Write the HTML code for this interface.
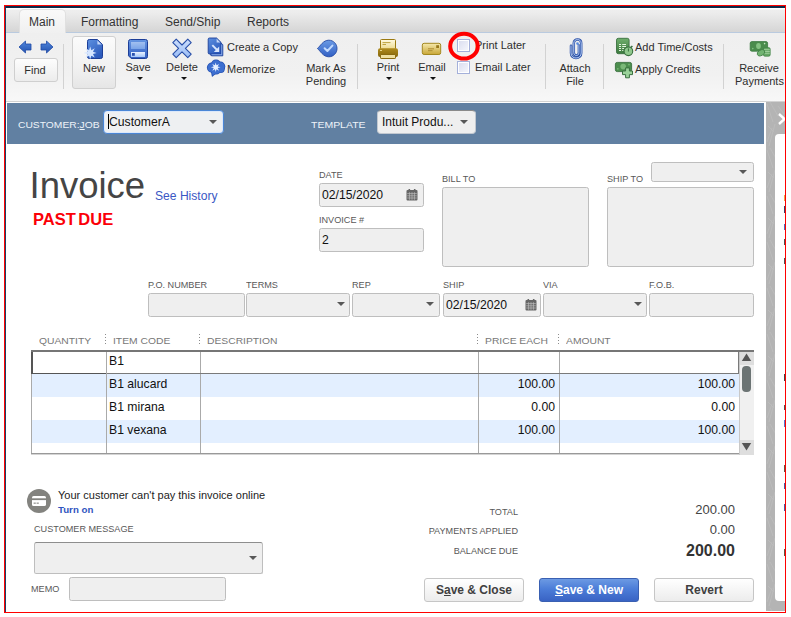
<!DOCTYPE html>
<html>
<head>
<meta charset="utf-8">
<title>Invoice</title>
<style>
html,body{margin:0;padding:0;background:#fff;}
body{width:791px;height:617px;overflow:hidden;position:relative;font-family:"Liberation Sans",Arial,sans-serif;color:#333;}
#frame{position:absolute;left:4px;top:5px;width:780px;height:606px;border:1px solid #f00;overflow:hidden;background:#fff;}
#pg{position:absolute;left:-5px;top:-6px;width:791px;height:617px;}
#pg div,#pg span,#pg svg{position:absolute;}
.t{white-space:nowrap;line-height:1;}
.tb{font-size:11px;color:#2e2e2e;}
.c{text-align:center;}
.lbl{font-size:9.6px;color:#585858;transform:scaleX(0.95);transform-origin:0 0;}
.lbl.r{transform-origin:100% 0;}
.fld{background:#efefef;border:1px solid #bebebe;border-radius:2.5px;box-sizing:border-box;}
.sep{width:1px;background:#d2d2d2;top:44px;height:45px;}
.arr{width:0;height:0;border-left:4px solid transparent;border-right:4px solid transparent;border-top:4.5px solid #585858;}
.tarr{width:0;height:0;border-left:3px solid transparent;border-right:3px solid transparent;border-top:3px solid #111;}
.hl{font-size:9.5px;color:#777;transform:scaleX(1.085);transform-origin:0 0;}
.r{text-align:right;}
.dot{top:334px;width:1px;height:11px;background:repeating-linear-gradient(#8c8c8c 0,#8c8c8c 1px,transparent 1px,transparent 3px);}
.cell{font-size:12.2px;color:#111;}
.btn{box-sizing:border-box;border:1px solid #c6c6c6;border-radius:3px;background:linear-gradient(#ffffff,#ececec);font-size:12px;font-weight:bold;color:#404040;text-align:center;line-height:22px;width:100px;height:24px;top:578px;}
</style>
</head>
<body>
<div id="frame"><div id="pg">

<!-- chrome -->
<div style="left:5px;top:8px;width:780px;height:25px;background:linear-gradient(#ffffff 0,#ffffff 1px,#eeeeee 2px,#ececec 20%,#d5d5d5 96%,#d5d5d5);"></div>
<div style="left:5px;top:32px;width:780px;height:1px;background:#b9cadf;"></div>
<div style="left:5px;top:33px;width:780px;height:69px;background:linear-gradient(#efefef,#f1f1f1 60%,#f8f8f8);"></div>
<div style="left:5px;top:101px;width:780px;height:1px;background:#d2d2d2;"></div>
<div style="left:5px;top:6px;width:780px;height:2px;background:#0d2a4a;"></div>
<div style="left:5px;top:6px;width:1px;height:606px;background:#1f3f63;"></div>

<!-- tabs -->
<div style="left:19px;top:9px;width:47px;height:24px;box-sizing:border-box;border:1px solid #e0e0e0;border-bottom:none;border-radius:5px 5px 0 0;background:linear-gradient(#f9f9f9,#f0f0f0);"></div>
<div class="t" style="left:29px;top:16px;font-size:12px;color:#333;">Main</div>
<div class="t" style="left:81px;top:16px;font-size:12px;color:#333;">Formatting</div>
<div class="t" style="left:165px;top:16px;font-size:12px;color:#333;">Send/Ship</div>
<div class="t" style="left:247px;top:16px;font-size:12px;color:#333;">Reports</div>

<!-- toolbar: nav -->
<svg style="left:18px;top:40px" width="14" height="14" viewBox="0 0 14 14"><defs><linearGradient id="gb" x1="0" y1="0" x2="0" y2="1"><stop offset="0" stop-color="#4f86dc"/><stop offset="1" stop-color="#2553b0"/></linearGradient></defs><path d="M1 7 L7.5 1 L7.5 4 L13 4 L13 10 L7.5 10 L7.5 13 Z" fill="url(#gb)" stroke="#1f4aa6" stroke-width="0.8" stroke-linejoin="round"/></svg>
<svg style="left:40px;top:40px" width="14" height="14" viewBox="0 0 14 14"><path d="M13 7 L6.5 1 L6.5 4 L1 4 L1 10 L6.5 10 L6.5 13 Z" fill="url(#gb)" stroke="#1f4aa6" stroke-width="0.8" stroke-linejoin="round"/></svg>
<div style="left:14px;top:58px;width:44px;height:24px;box-sizing:border-box;border:1px solid #cfcfcf;border-radius:3px;background:linear-gradient(#fdfdfd,#ececec);"></div>
<div class="t tb c" style="left:13px;top:65px;width:44px;">Find</div>
<div class="sep" style="left:63px;"></div>

<!-- New -->
<div style="left:72px;top:36px;width:44px;height:53px;box-sizing:border-box;border:1px solid #d0d0d0;border-radius:3px;background:linear-gradient(#fbfbfb,#f1f1f1 60%,#e6e6e6);"></div>
<svg style="left:85px;top:38px;overflow:visible" width="20" height="22" viewBox="0 0 20 22"><defs><linearGradient id="gn" x1="0" y1="0" x2="0.6" y2="1"><stop offset="0" stop-color="#5d90e0"/><stop offset="1" stop-color="#2c5abc"/></linearGradient></defs><path d="M4.3 1.5 H12.4 L17.5 6.6 V18.7 Q17.5 20.5 15.7 20.5 H4.3 Q2.5 20.5 2.5 18.7 V3.3 Q2.5 1.5 4.3 1.5 Z" fill="url(#gn)" stroke="#1d3f98" stroke-width="1"/><path d="M12.4 2.4 V6.6 H16.6 Z" fill="#c2d6f8"/><path d="M5.20,8.50 L6.35,12.13 L9.73,10.37 L7.97,13.75 L11.60,14.90 L7.97,16.05 L9.73,19.43 L6.35,17.67 L5.20,21.30 L4.05,17.67 L0.67,19.43 L2.43,16.05 L-1.20,14.90 L2.43,13.75 L0.67,10.37 L4.05,12.13Z" fill="#d6e6ff"/></svg>
<div class="t tb c" style="left:72px;top:63px;width:44px;">New</div>

<!-- Save -->
<svg style="left:127px;top:38px" width="22" height="22" viewBox="0 0 22 22"><defs><linearGradient id="gs" x1="0" y1="0" x2="0" y2="1"><stop offset="0" stop-color="#6696e2"/><stop offset="1" stop-color="#335fc2"/></linearGradient><linearGradient id="gs2" x1="0" y1="0" x2="0" y2="1"><stop offset="0" stop-color="#a2c0f0"/><stop offset="1" stop-color="#7aa4e8"/></linearGradient><linearGradient id="gs3" x1="0" y1="0" x2="0" y2="1"><stop offset="0" stop-color="#eaf2ff"/><stop offset="1" stop-color="#a4c6fa"/></linearGradient></defs><path d="M3.5 1.5 H18.5 Q20.5 1.5 20.5 3.5 V18.5 Q20.5 20.5 18.5 20.5 H4.2 L1.5 17.8 V3.5 Q1.5 1.5 3.5 1.5 Z" fill="url(#gs)" stroke="#1d3f98" stroke-width="1"/><rect x="4" y="4" width="14" height="7" fill="url(#gs2)"/><rect x="4" y="14" width="14" height="5" fill="url(#gs3)"/><rect x="5" y="15" width="2.8" height="2.8" fill="#2a52b0"/></svg>
<div class="t tb c" style="left:118px;top:62px;width:40px;">Save</div>
<div class="tarr" style="left:137px;top:77px;"></div>

<!-- Delete -->
<svg style="left:171px;top:38px" width="22" height="22" viewBox="0 0 22 22"><defs><linearGradient id="gx" x1="0" y1="0" x2="1" y2="1"><stop offset="0" stop-color="#dbe8fe"/><stop offset="1" stop-color="#8ab2f4"/></linearGradient></defs><g transform="translate(11,10.4) rotate(45)"><path d="M-2.4,-10.6 H2.4 V-2.4 H10.6 V2.4 H2.4 V10.6 H-2.4 V2.4 H-10.6 V-2.4 H-2.4 Z" fill="url(#gx)" stroke="#274ea8" stroke-width="1.1" stroke-linejoin="round"/></g></svg>
<div class="t tb c" style="left:160px;top:62px;width:44px;">Delete</div>
<div class="tarr" style="left:181px;top:77px;"></div>

<!-- Create copy / memorize -->
<svg style="left:207px;top:37px" width="18" height="20" viewBox="0 0 18 20"><path d="M3.5 3.5 H11.6 L15.8 7.7 V18.8 H5 Q3.5 18.8 3.5 17.5 Z" fill="#3f70d0" stroke="#1d3f98" stroke-width="0.9"/><path d="M2.5 1 H9.6 L14 5.4 V17 H2.5 Q1.2 17 1.2 15.8 V2.2 Q1.2 1 2.5 1 Z" fill="url(#gn)" stroke="#1d3f98" stroke-width="0.9"/><path d="M14.7 7.6 V17.7 H4.6" fill="none" stroke="#a8c6f6" stroke-width="0.7"/><path d="M9.6 1.7 V5.4 H13.3 Z" fill="#c2d6f8"/><path d="M5.3 8.2 L10.6 13.5" stroke="#d8e6fe" stroke-width="1.9"/><path d="M12.2 15 V9.6 L6.8 15 Z" fill="#d8e6fe"/></svg>
<div class="t tb" style="left:227px;top:42px;">Create a Copy</div>
<svg style="left:206px;top:59px" width="20" height="19" viewBox="0 0 20 19"><g fill="#2450b0"><circle cx="6" cy="8.6" r="5.1"/><circle cx="10" cy="5.6" r="5.1"/><circle cx="14.2" cy="7.6" r="5.1"/><circle cx="10" cy="10.2" r="5.3"/><circle cx="14.6" cy="10" r="4.1"/><path d="M4.6 11 L6 18 L11.5 13.5 Z"/></g><g fill="#3d6fd0"><circle cx="6" cy="8.6" r="4.3999999999999995"/><circle cx="10" cy="5.6" r="4.3999999999999995"/><circle cx="14.2" cy="7.6" r="4.3999999999999995"/><circle cx="10" cy="10.2" r="4.6"/><circle cx="14.6" cy="10" r="3.4"/><path d="M5.6 12 L6.6 16.6 L10.5 13.4 Z"/></g><path d="M9.70,3.50 L10.50,6.36 L13.09,4.91 L11.64,7.50 L14.50,8.30 L11.64,9.10 L13.09,11.69 L10.50,10.24 L9.70,13.10 L8.90,10.24 L6.31,11.69 L7.76,9.10 L4.90,8.30 L7.76,7.50 L6.31,4.91 L8.90,6.36Z" fill="#e6f0ff"/></svg>
<div class="t tb" style="left:227px;top:64px;">Memorize</div>

<!-- Mark as pending -->
<svg style="left:316px;top:39px" width="23" height="19" viewBox="0 0 23 19"><defs><linearGradient id="gk" x1="0" y1="0" x2="0" y2="1"><stop offset="0" stop-color="#6a9ae4"/><stop offset="1" stop-color="#3260c4"/></linearGradient></defs><path d="M1.4 9.5 C4.5 7 7 1.2 12.8 1.2 C17.4 1.2 21 4.9 21 9.5 C21 14.1 17.4 17.8 12.8 17.8 C7 17.8 4.5 12 1.4 9.5 Z" fill="url(#gk)" stroke="#2248a4" stroke-width="0.9"/><path d="M8.6 9.2 L11.4 12 L16.4 6.6" fill="none" stroke="#c2dafe" stroke-width="2" stroke-linecap="round" stroke-linejoin="round"/></svg>
<div class="t tb c" style="left:300px;top:63px;width:52px;">Mark As</div>
<div class="t tb c" style="left:300px;top:76px;width:52px;">Pending</div>
<div class="sep" style="left:357px;"></div>

<!-- Print / Email -->
<svg style="left:377px;top:38px" width="22" height="22" viewBox="0 0 22 22"><defs><linearGradient id="gp" x1="0" y1="0" x2="0" y2="1"><stop offset="0" stop-color="#fffbe2"/><stop offset="1" stop-color="#ecd98c"/></linearGradient><linearGradient id="go" x1="0" y1="0" x2="0" y2="1"><stop offset="0" stop-color="#b08c1e"/><stop offset="1" stop-color="#86670c"/></linearGradient></defs><rect x="3.5" y="1.5" width="15" height="10" rx="1" fill="url(#gp)" stroke="#9a7a12" stroke-width="1"/><path d="M5.5 4.6 H13.5 M5.5 6.5 H9" stroke="#b89a30" stroke-width="0.9"/><rect x="1" y="10.2" width="20" height="8.8" rx="2" fill="url(#go)"/><rect x="3" y="12" width="2" height="1" fill="#e8d68a"/><rect x="3.5" y="16.5" width="15" height="4" rx="0.6" fill="#efe0a0" stroke="#8a6a10" stroke-width="1"/></svg>
<div class="t tb c" style="left:368px;top:62px;width:40px;">Print</div>
<div class="tarr" style="left:386px;top:77px;"></div>
<svg style="left:421px;top:42px" width="21" height="14" viewBox="0 0 21 14"><defs><linearGradient id="ge" x1="0" y1="0" x2="0" y2="1"><stop offset="0" stop-color="#f6e9ac"/><stop offset="1" stop-color="#c8a636"/></linearGradient></defs><rect x="1.3" y="1.3" width="18.4" height="11.2" rx="1.8" fill="url(#ge)" stroke="#a38820" stroke-width="1"/><rect x="15.2" y="3.2" width="2.8" height="2.8" fill="#98781a"/><path d="M7 6.8 H13 M7 8.7 H11.5" stroke="#a8882a" stroke-width="0.9"/></svg>
<div class="t tb c" style="left:412px;top:62px;width:40px;">Email</div>
<div class="tarr" style="left:430px;top:77px;"></div>

<!-- checkboxes -->
<div style="left:457px;top:39px;width:13px;height:13px;box-sizing:border-box;border:1px solid #a4b0da;background:#fff;"></div>
<div style="left:459px;top:41px;width:9px;height:9px;background:linear-gradient(135deg,#dcdff0,#f4f5fb);"></div>
<div style="left:457px;top:61px;width:13px;height:13px;box-sizing:border-box;border:1px solid #a4b0da;background:#fff;"></div>
<div style="left:459px;top:63px;width:9px;height:9px;background:linear-gradient(135deg,#dcdff0,#f4f5fb);"></div>
<div class="t tb" style="left:475px;top:40px;">Print Later</div>
<div class="t tb" style="left:475px;top:62px;">Email Later</div>
<div class="sep" style="left:545px;"></div>

<!-- Attach -->
<svg style="left:568px;top:37px" width="16" height="23" viewBox="0 0 16 23"><path d="M3 8.8 V16 C3 19.5 5.5 21 8 21 C11 21 13.2 19 13.2 16 V6.2 C13.2 3.8 11.6 2.6 9.5 2.6 C7.4 2.6 5.8 3.8 5.8 6.2 V15.5 C5.8 17.5 7 18.5 8.4 18.5 C9.8 18.5 10.9 17.5 10.9 15.5 V8.5" fill="none" stroke="#2c52a8" stroke-width="2.5" stroke-linecap="round"/><path d="M3 8.8 V16 C3 19.5 5.5 21 8 21 C11 21 13.2 19 13.2 16 V6.2 C13.2 3.8 11.6 2.6 9.5 2.6 C7.4 2.6 5.8 3.8 5.8 6.2 V15.5 C5.8 17.5 7 18.5 8.4 18.5 C9.8 18.5 10.9 17.5 10.9 15.5 V8.5" fill="none" stroke="#c6dafc" stroke-width="0.9" stroke-linecap="round"/><circle cx="9.5" cy="6.6" r="1.3" fill="#5a8ce0"/></svg>
<div class="t tb c" style="left:550px;top:63px;width:50px;">Attach</div>
<div class="t tb c" style="left:550px;top:76px;width:50px;">File</div>
<div class="sep" style="left:603px;"></div>

<!-- Add time/costs, apply credits -->
<svg style="left:615px;top:37px" width="20" height="20" viewBox="0 0 20 20"><defs><linearGradient id="gg" x1="0" y1="0" x2="0" y2="1"><stop offset="0" stop-color="#6fae6c"/><stop offset="1" stop-color="#3c783e"/></linearGradient></defs><rect x="1.5" y="1.3" width="12.6" height="15.4" rx="1.8" fill="url(#gg)" stroke="#3a7040" stroke-width="0.9"/><g stroke="#e4f4e0" stroke-width="1"><path d="M4 7.5 H6 M7.2 7.5 H11"/><path d="M4 9.5 H6 M7.2 9.5 H11"/><path d="M4 11.5 H6 M7.2 11.5 H9"/><path d="M4 13.5 H6 M7.2 13.5 H8.4"/></g><path d="M15.6 10.6 L17.4 9" stroke="#3a7040" stroke-width="1.6"/><circle cx="13.4" cy="14.3" r="4.3" fill="#8fc88c" stroke="#3a7040" stroke-width="1.1"/><path d="M13.4 14.5 V11.4" stroke="#3a7040" stroke-width="1"/></svg>
<div class="t tb" style="left:635px;top:42px;">Add Time/Costs</div>
<svg style="left:614px;top:61px" width="20" height="18" viewBox="0 0 20 18"><rect x="1.4" y="1.4" width="16.2" height="9.2" rx="1.8" fill="#4c8e4e" stroke="#3a7040" stroke-width="0.9"/><circle cx="9.2" cy="5.6" r="2.8" fill="#7ab878"/><circle cx="3.8" cy="7.8" r="0.9" fill="#7ab878"/><circle cx="15" cy="3.6" r="0.9" fill="#7ab878"/><path d="M11.6 6.9 H15.4 V10 H18.5 V13.6 H15.4 V16.8 H11.6 V13.6 H8.5 V10 H11.6 Z" fill="#9ad29a" stroke="#3a7040" stroke-width="1" stroke-linejoin="round"/></svg>
<div class="t tb" style="left:635px;top:64px;">Apply Credits</div>
<div class="sep" style="left:723px;"></div>

<!-- Receive payments -->
<svg style="left:749px;top:40px" width="22" height="17" viewBox="0 0 22 17"><rect x="1.2" y="1.6" width="17.4" height="9.6" rx="1.6" fill="#4a8c4c" stroke="#3a7a40" stroke-width="0.8"/><ellipse cx="9.5" cy="6" rx="2.4" ry="3" fill="#84c282"/><circle cx="3.8" cy="8.6" r="0.8" fill="#84c282"/><circle cx="15.6" cy="3.6" r="0.8" fill="#c4e6c0"/><rect x="14.4" y="7.6" width="6.8" height="8.6" rx="1.5" fill="#66a866" stroke="#3f7f44" stroke-width="0.7"/><path d="M15 9.7 H20.8 M15 11.5 H20.8 M15 13.3 H20.8" stroke="#b4dcb0" stroke-width="0.7"/><ellipse cx="12" cy="12.8" rx="4" ry="2.7" transform="rotate(-28 12 12.8)" fill="#72b472" stroke="#3f7f44" stroke-width="0.8"/></svg>
<div class="t tb c" style="left:734px;top:63px;width:50px;">Receive</div>
<div class="t tb" style="left:735px;top:76px;">Payments</div>

<!-- red annotation circle -->
<svg style="left:446px;top:30px" width="36" height="33" viewBox="0 0 36 33"><ellipse cx="18" cy="16.2" rx="13.8" ry="12.4" fill="none" stroke="#ff0000" stroke-width="4"/></svg>

<!-- blue band -->
<div style="left:7px;top:103px;width:757px;height:41px;background:#6180a2;"></div>
<div class="t" style="left:18px;top:120px;font-size:9.8px;transform:scaleX(1.05);transform-origin:0 0;color:#eef3f9;">CUSTOMER:<u>J</u>OB</div>
<div style="left:103px;top:110px;width:121px;height:24px;box-sizing:border-box;border:1px solid #4a86d6;border-radius:4px;background:#eef0f2;box-shadow:inset 0 0 0 1px #dbe8fa;"></div>
<div style="left:108px;top:114px;width:1px;height:15px;background:#000;"></div>
<div class="t" style="left:109px;top:116px;font-size:12.2px;color:#111;">CustomerA</div>
<div class="arr" style="left:209px;top:119.5px;"></div>
<div class="t" style="left:311px;top:120px;font-size:9.8px;transform:scaleX(1.07);transform-origin:0 0;color:#eef3f9;">TEMPLATE</div>
<div style="left:377px;top:110px;width:99px;height:24px;box-sizing:border-box;border:1px solid #c2c8d0;border-top-color:#8a8a8a;border-radius:4px;background:#efefef;"></div>
<div class="t" style="left:382px;top:116px;font-size:12px;color:#111;">Intuit Produ...</div>
<div class="arr" style="left:460px;top:119.5px;"></div>

<!-- right sidebar -->
<div style="left:766px;top:102px;width:19px;height:509px;background:#b4b4b4;"></div>
<svg style="left:766px;top:102px" width="19" height="509" viewBox="0 0 19 509"><defs><pattern id="tx" width="19" height="46" patternUnits="userSpaceOnUse"><g stroke="#c4c4c4" stroke-width="0.8" opacity="0.55" fill="none"><path d="M1 2 L7 20"/><path d="M4 0 L12 14"/><path d="M9 22 L3 44"/><path d="M6 26 L1 40"/><path d="M12 4 L18 12"/><path d="M2 24 L8 30"/></g></pattern></defs><rect width="19" height="509" fill="url(#tx)"/></svg>
<div style="left:774.5px;top:134px;width:12px;height:467px;background:#fff;border-radius:4px 0 0 4px;"></div>
<svg style="left:777px;top:111.5px" width="10" height="14" viewBox="0 0 10 14"><path d="M2 2 L7.5 7 L2 12" fill="none" stroke="#fff" stroke-width="2.4"/></svg>

<!-- heading -->
<div class="t" style="left:29.5px;top:168px;font-size:36.5px;color:#454545;">Invoice</div>
<div class="t" style="left:155px;top:190px;font-size:12.1px;color:#3a57c4;">See History</div>
<div class="t" style="left:33px;top:211px;font-size:16.5px;word-spacing:-2px;font-weight:bold;color:#fb0007;">PAST DUE</div>

<!-- date / invoice # -->
<div class="t lbl" style="left:319px;top:170px;">DATE</div>
<div class="fld" style="left:319px;top:183px;width:105px;height:24px;"></div>
<div class="t cell" style="left:322px;top:189px;">02/15/2020</div>
<div class="t lbl" style="left:319px;top:215px;">INVOICE #</div>
<div class="fld" style="left:319px;top:228px;width:105px;height:24px;"></div>
<div class="t cell" style="left:322px;top:234px;">2</div>

<div class="t lbl" style="left:442px;top:174px;">BILL TO</div>
<div class="fld" style="left:442px;top:187px;width:147px;height:80px;"></div>
<div class="t lbl" style="left:607px;top:174px;">SHIP TO</div>
<div class="fld" style="left:651px;top:162px;width:103px;height:20px;"></div>
<div class="arr" style="left:739px;top:169.5px;"></div>
<div class="fld" style="left:607px;top:187px;width:147px;height:80px;"></div>

<!-- second row -->
<div class="t lbl" style="left:148px;top:280px;">P.O. NUMBER</div>
<div class="t lbl" style="left:246px;top:280px;">TERMS</div>
<div class="t lbl" style="left:352px;top:280px;">REP</div>
<div class="t lbl" style="left:443px;top:280px;">SHIP</div>
<div class="t lbl" style="left:543px;top:280px;">VIA</div>
<div class="t lbl" style="left:649px;top:280px;">F.O.B.</div>
<div class="fld" style="left:148px;top:293px;width:97px;height:24px;"></div>
<div class="fld" style="left:246px;top:293px;width:104px;height:24px;"></div>
<div class="arr" style="left:336.5px;top:301.5px;"></div>
<div class="fld" style="left:352px;top:293px;width:88px;height:24px;"></div>
<div class="arr" style="left:425.5px;top:301.5px;"></div>
<div class="fld" style="left:443px;top:293px;width:98px;height:24px;"></div>
<div class="t cell" style="left:446px;top:299px;">02/15/2020</div>
<div class="fld" style="left:543px;top:293px;width:104px;height:24px;"></div>
<div class="arr" style="left:633.5px;top:301.5px;"></div>
<div class="fld" style="left:649px;top:293px;width:105px;height:24px;"></div>
<svg style="left:406px;top:189px" width="12" height="12" viewBox="0 0 12 12"><rect x="0.5" y="1" width="11" height="10.5" rx="1" fill="#666"/><rect x="2.5" y="0" width="1.6" height="2.4" fill="#666"/><rect x="7.9" y="0" width="1.6" height="2.4" fill="#666"/><g stroke="#bdbdbd" stroke-width="0.7"><path d="M1.2 4.6 H10.8 M1.2 6.8 H10.8 M1.2 9 H10.8"/><path d="M3.6 3.2 V10.8 M6 3.2 V10.8 M8.4 3.2 V10.8"/></g></svg>
<svg style="left:525px;top:299px" width="12" height="12" viewBox="0 0 12 12"><rect x="0.5" y="1" width="11" height="10.5" rx="1" fill="#666"/><rect x="2.5" y="0" width="1.6" height="2.4" fill="#666"/><rect x="7.9" y="0" width="1.6" height="2.4" fill="#666"/><g stroke="#bdbdbd" stroke-width="0.7"><path d="M1.2 4.6 H10.8 M1.2 6.8 H10.8 M1.2 9 H10.8"/><path d="M3.6 3.2 V10.8 M6 3.2 V10.8 M8.4 3.2 V10.8"/></g></svg>

<!-- table header -->
<div class="t hl" style="left:39px;top:336px;">QUANTITY</div>
<div class="t hl" style="left:113px;top:336px;">ITEM CODE</div>
<div class="t hl" style="left:207px;top:336px;">DESCRIPTION</div>
<div class="t hl" style="left:485px;top:336px;">PRICE EACH</div>
<div class="t hl" style="left:566px;top:336px;">AMOUNT</div>
<div class="dot" style="left:105px;"></div><div class="dot" style="left:199px;"></div><div class="dot" style="left:477px;"></div><div class="dot" style="left:558px;"></div>

<!-- table -->
<div style="left:31px;top:350px;width:723px;height:105px;background:#fff;"></div>
<div style="left:32px;top:374px;width:707px;height:23px;background:#e3efff;"></div>
<div style="left:32px;top:420px;width:707px;height:23px;background:#e3efff;"></div>
<div style="left:106px;top:352px;width:1px;height:101px;background:#aaa;"></div>
<div style="left:200px;top:352px;width:1px;height:101px;background:#aaa;"></div>
<div style="left:478px;top:352px;width:1px;height:101px;background:#aaa;"></div>
<div style="left:559px;top:352px;width:1px;height:101px;background:#aaa;"></div>
<div style="left:31px;top:352px;width:1px;height:102px;background:#aaa;"></div>
<div style="left:31px;top:453px;width:708px;height:1px;background:#999;"></div>
<div style="left:31px;top:454px;width:708px;height:1px;background:#d4d4d4;"></div>
<div style="left:107px;top:373px;width:632px;height:1px;background:#7a7a7a;"></div>
<div style="left:738px;top:352px;width:1px;height:22px;background:#7a7a7a;"></div>
<div style="left:31px;top:350px;width:75px;height:24px;box-sizing:border-box;border:2px solid #555;border-right:none;border-bottom-width:1px;"></div>
<div style="left:31px;top:350px;width:723px;height:2px;background:#767676;"></div>
<!-- scrollbar -->
<div style="left:739px;top:352px;width:15px;height:103px;background:#f0f0f0;"></div>
<div style="left:739px;top:352px;width:1px;height:103px;background:#c8c8c8;"></div>
<div style="left:740px;top:352px;width:14px;height:13px;background:#dedede;"></div>
<div style="left:740px;top:440px;width:14px;height:15px;background:#dedede;"></div>
<svg style="left:741px;top:353px" width="11" height="9" viewBox="0 0 11 9"><path d="M5.5 0.6 L10.2 8 H0.8 Z" fill="#555"/></svg>
<svg style="left:741px;top:442px" width="11" height="9" viewBox="0 0 11 9"><path d="M5.5 8.4 L10.2 1 H0.8 Z" fill="#555"/></svg>
<div style="left:742px;top:366px;width:9px;height:26px;border-radius:4px;background:#6c7474;"></div>

<div class="t cell" style="left:109px;top:355px;">B1</div>
<div class="t cell" style="left:109px;top:378px;">B1 alucard</div>
<div class="t cell" style="left:109px;top:401px;">B1 mirana</div>
<div class="t cell" style="left:109px;top:424px;">B1 vexana</div>
<div class="t cell r" style="left:480px;top:378px;width:75px;">100.00</div>
<div class="t cell r" style="left:480px;top:401px;width:75px;">0.00</div>
<div class="t cell r" style="left:480px;top:424px;width:75px;">100.00</div>
<div class="t cell r" style="left:600px;top:378px;width:135px;">100.00</div>
<div class="t cell r" style="left:600px;top:401px;width:135px;">0.00</div>
<div class="t cell r" style="left:600px;top:424px;width:135px;">100.00</div>

<!-- payments -->
<svg style="left:27px;top:489px" width="24" height="24" viewBox="0 0 24 24"><circle cx="12" cy="12" r="12" fill="#83837f"/><rect x="5" y="7" width="14" height="10" rx="1.6" fill="#fff"/><rect x="5" y="9.3" width="14" height="1.8" fill="#83837f"/><rect x="6.6" y="13.6" width="2.2" height="1.1" fill="#83837f"/><rect x="9.6" y="13.6" width="2.2" height="1.1" fill="#83837f"/></svg>
<div class="t" style="left:58px;top:490px;font-size:11px;color:#222;">Your customer can't pay this invoice online</div>
<div class="t" style="left:58px;top:505px;font-size:9.7px;font-weight:bold;color:#2f55c0;">Turn on</div>
<div class="t lbl" style="left:34px;top:524px;">CUSTOMER MESSAGE</div>
<div class="fld" style="left:34px;top:542px;width:229px;height:32px;border-top-color:#8e8e8e;"></div>
<div class="arr" style="left:249px;top:555.5px;"></div>
<div class="t lbl" style="left:31px;top:584px;">MEMO</div>
<div class="fld" style="left:69px;top:577px;width:157px;height:24px;"></div>

<!-- totals -->
<div class="t lbl r" style="left:400px;top:507px;width:118px;">TOTAL</div>
<div class="t lbl r" style="left:400px;top:526px;width:118px;">PAYMENTS APPLIED</div>
<div class="t lbl r" style="left:400px;top:546px;width:118px;">BALANCE DUE</div>
<div class="t r" style="left:600px;top:503px;width:135px;font-size:13px;color:#444;">200.00</div>
<div class="t r" style="left:600px;top:523px;width:135px;font-size:13px;color:#444;">0.00</div>
<div class="t r" style="left:600px;top:543px;width:135px;font-size:16px;font-weight:bold;color:#333;">200.00</div>

<!-- buttons -->
<div class="btn" style="left:424px;">S<u>a</u>ve &amp; Close</div>
<div class="btn" style="left:539px;border-color:#3a60b2;background:linear-gradient(#6c9ae3,#4c7dd8 45%,#3963c4);color:#fff;"><u>S</u>ave &amp; New</div>
<div class="btn" style="left:654px;">Revert</div>

<!-- clipped sidebar fragments -->
<div style="left:783.6px;top:195px;width:1.4px;height:6px;background:#e8952a;opacity:0.85;"></div>
<div style="left:783.6px;top:206px;width:1.4px;height:7px;background:#1a1f4a;opacity:0.85;"></div>
<div style="left:783.6px;top:224px;width:1.4px;height:6px;background:#2f55b0;opacity:0.85;"></div>
<div style="left:783.6px;top:239px;width:1.4px;height:6px;background:#333;opacity:0.85;"></div>
<div style="left:783.6px;top:258px;width:1.4px;height:6px;background:#333;opacity:0.85;"></div>
<div style="left:783.6px;top:374px;width:1.4px;height:7px;background:#222;opacity:0.85;"></div>
<div style="left:783.6px;top:405px;width:1.4px;height:5px;background:#333;opacity:0.85;"></div>
<div style="left:783.6px;top:420px;width:1.4px;height:7px;background:#3d5fc4;opacity:0.85;"></div>
<div style="left:783.6px;top:465px;width:1.4px;height:7px;background:#4a3520;opacity:0.85;"></div>
<div style="left:783.6px;top:483px;width:1.4px;height:6px;background:#2a3f90;opacity:0.85;"></div>
<div style="left:783.6px;top:504px;width:1.4px;height:7px;background:#2a3f90;opacity:0.85;"></div>
<div style="left:783.6px;top:549px;width:1.4px;height:7px;background:#4a3520;opacity:0.85;"></div>

</div></div>
</body>
</html>
